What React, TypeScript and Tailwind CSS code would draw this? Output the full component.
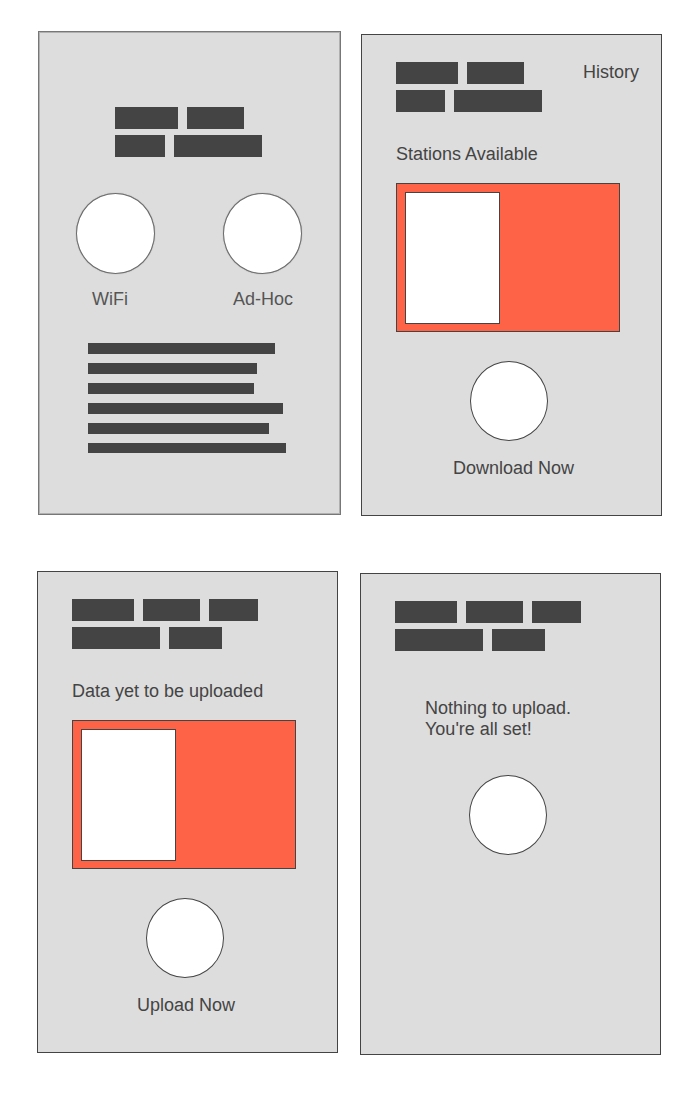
import type { ReactNode } from "react";

const BAR_WIDTHS = {
  sm: "w-[49px]",
  smWide: "w-[50px]",
  md: "w-[53px]",
  lg: "w-[57px]",
  xl: "w-[62px]",
  xlWide: "w-[63px]",
  full: "w-[88px]",
};

type BarSize = keyof typeof BAR_WIDTHS;

function TitleBars({ rows }: { rows: BarSize[][] }) {
  return (
    <div className="flex flex-col gap-1.5">
      {rows.map((row, i) => (
        <div key={i} className="flex gap-[9px]">
          {row.map((size, j) => (
            <div key={j} className={`h-[22px] bg-[#444] ${BAR_WIDTHS[size]}`} />
          ))}
        </div>
      ))}
    </div>
  );
}

const CONNECT_TITLE: BarSize[][] = [["xlWide", "lg"], ["smWide", "full"]];
const SHORT_TITLE: BarSize[][] = [["xl", "lg"], ["sm", "full"]];
const LONG_TITLE: BarSize[][] = [["xl", "lg", "sm"], ["full", "md"]];

function Screen({ children }: { children: ReactNode }) {
  return (
    <section className="border border-[#444] bg-[#ddd] pt-[27px] pr-[22px] pl-[34px]">
      {children}
    </section>
  );
}

function DataCard() {
  return (
    <div className="mt-[18px] mr-[19px] border border-[#444] bg-[#ff6347] px-2 pt-2 pb-[7px]">
      <div className="h-[132px] w-[95px] border border-[#444] bg-white" />
    </div>
  );
}

const CIRCLE = "block h-[80px] w-[78px] rounded-[50%] border border-[#444] bg-white";
const SOFT_CIRCLE =
  "block h-[81px] w-[79px] rounded-[50%] border border-[#6c6c6c] bg-white shadow-[0_0_1px_#888]";

function ConnectScreen() {
  return (
    <section className="border border-[#777] bg-[#ddd] pt-[75px] pb-[61px] pl-[37px] shadow-[inset_0_0_0_1px_#b0b0b0]">
      <div className="ml-[39px]">
        <TitleBars rows={CONNECT_TITLE} />
      </div>
      <div className="mt-9 flex gap-[68px] text-[#555]">
        <button type="button" className="flex flex-col items-start gap-[15px]">
          <span className={SOFT_CIRCLE} />
          <span className="ml-4">WiFi</span>
        </button>
        <button type="button" className="flex flex-col items-start gap-[15px]">
          <span className={SOFT_CIRCLE} />
          <span className="ml-2.5">Ad-Hoc</span>
        </button>
      </div>
      <div className="mt-[33px] ml-3 flex flex-col gap-[9px]">
        <div className="h-[11px] w-[187px] bg-[#444]" />
        <div className="h-[11px] w-[169px] bg-[#444]" />
        <div className="h-[11px] w-[166px] bg-[#444]" />
        <div className="h-[11px] w-[195px] bg-[#444]" />
        <div className="h-[11px] w-[181px] bg-[#444]" />
        <div className="h-[10px] w-[198px] bg-[#444]" />
      </div>
    </section>
  );
}

export default function App() {
  return (
    <main className="min-h-screen bg-white pt-[31px] pb-[45px] font-['Liberation_Sans',Arial,sans-serif] text-[18px] leading-[21px] text-[#444]">
      <div className="grid grid-cols-[303fr_301fr] items-start gap-5 px-[38px]">
        <ConnectScreen />
        <div className="pt-[3px]">
          <Screen>
            <div className="flex items-start justify-between">
              <TitleBars rows={SHORT_TITLE} />
              <a href="#history">History</a>
            </div>
            <h2 className="mt-8">Stations Available</h2>
            <DataCard />
            <button type="button" className="mt-[29px] mb-9 ml-[57px] flex flex-col items-start gap-[17px]">
              <span className={`ml-[17px] ${CIRCLE}`} />
              <span>Download Now</span>
            </button>
          </Screen>
        </div>
      </div>

      <div className="mt-[55px] grid grid-cols-2 items-start gap-[22px] pr-[39px] pl-[37px]">
        <Screen>
          <TitleBars rows={LONG_TITLE} />
          <h2 className="mt-8">Data yet to be uploaded</h2>
          <DataCard />
          <button type="button" className="mt-[29px] mb-9 ml-[65px] flex flex-col items-start gap-[17px]">
            <span className={`ml-[9px] ${CIRCLE}`} />
            <span>Upload Now</span>
          </button>
        </Screen>
        <div className="pt-0.5">
          <Screen>
            <TitleBars rows={LONG_TITLE} />
            <p id="upload-status" className="mt-[47px] ml-[30px]">
              Nothing to upload.
              <br />
              You're all set!
            </p>
            <button
              type="button"
              aria-labelledby="upload-status"
              className={`mt-[35px] mb-[199px] ml-[74px] ${CIRCLE}`}
            />
          </Screen>
        </div>
      </div>
    </main>
  );
}
